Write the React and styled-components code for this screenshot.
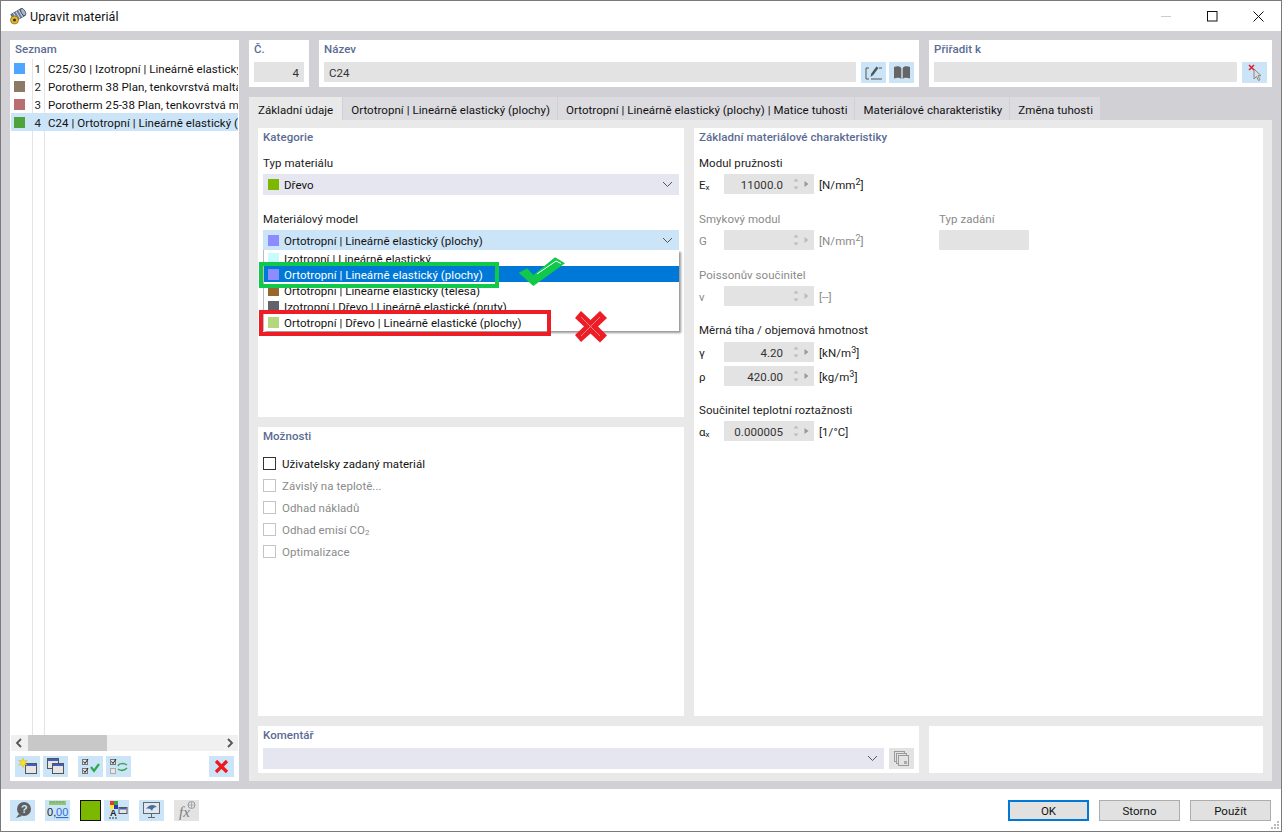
import React from 'react';
import styled, { createGlobalStyle } from 'styled-components';

const Global = createGlobalStyle`
  html, body { margin: 0; padding: 0; background: #fff; }
  body { font-family: Roboto, "Noto Sans", sans-serif; font-size: 11.5px; letter-spacing: .05px; color: #111; }
  * { box-sizing: border-box; }
  sub { font-size: 8px; line-height: 0; vertical-align: -1px; }
  sup { font-size: 9px; line-height: 0; vertical-align: 4px; }
`;

const Win = styled.div`
  width: 1282px; height: 832px; display: flex; flex-direction: column;
  border: 1px solid #7a7a7a; background: #fff; position: relative; overflow: hidden;
`;
const TitleBar = styled.div`
  height: 30px; display: flex; align-items: center; padding-left: 8px; gap: 3px; font-size: 12.5px; flex: none;
`;
const WinBtns = styled.div`
  margin-left: auto; display: flex; align-items: center; height: 100%;
`;
const WinBtn = styled.div`
  width: 46px; height: 100%; display: flex; align-items: center; justify-content: center;
`;
const Main = styled.div`
  height: 758px; flex: none; background: #d0d0d5; padding: 9px 9px 8px; display: flex; gap: 10px;
`;
const Left = styled.div`
  width: 229px; background: #fff; display: flex; flex-direction: column; flex: none;
`;
const Heading = styled.div`
  font-weight: 500; color: #5b6b94; height: 19px; padding: 2px 5px 0; font-size: 11.5px;
`;
const ListArea = styled.div`
  flex: 1; position: relative; overflow: hidden;
`;
const TreeLine = styled.div`
  position: absolute; top: 0; bottom: 0; left: ${p => p.$x}px; width: 1px; background: #e4e4e4;
`;
const Row = styled.div`
  height: 18px; display: flex; align-items: center; white-space: nowrap; position: relative;
  margin-left: 1px; margin-right: 1px; background: ${p => p.$sel ? '#cce4f7' : 'transparent'}; overflow: hidden;
`;
const RowSwatch = styled.span`
  width: 11px; height: 11px; background: ${p => p.$c}; margin-left: 3px; flex: none;
`;
const RowNum = styled.span`
  width: 16px; text-align: right; flex: none; color: #222; padding-top: 1px;
`;
const RowText = styled.span` margin-left: 7px; padding-top: 1px; `;
const HScroll = styled.div`
  height: 16px; margin: 0 1px; background: #f0f0f0; display: flex; align-items: center; justify-content: space-between; position: relative; flex: none;
`;
const Thumb = styled.div`
  position: absolute; left: 17px; width: 79px; top: 0; bottom: 0; background: #c8c8c8;
`;
const IconBar = styled.div`
  height: 30px; display: flex; gap: 3px; padding: 5px 5px 4px; flex: none;
`;
const IconBtn = styled.div`
  width: 25px; height: 21px; background: ${p => p.$off ? '#e3e3e3' : '#cce4f7'}; display: flex; align-items: center; justify-content: center; flex: none;
  margin-left: ${p => p.$ml || 0}px;
`;
const Right = styled.div`
  flex: 1; display: flex; flex-direction: column; min-width: 0;
`;
const TopRow = styled.div`
  display: grid; grid-template-columns: 60px 600px 343px; gap: 10px; height: 47px; flex: none;
`;
const TopCard = styled.div`
  background: #fff; display: flex; flex-direction: column;
`;
const TopBody = styled.div`
  display: flex; gap: 3px; padding: 3px 5px 0;
`;
const Field = styled.div`
  flex: 1; height: 20px; background: #e3e3e3; display: flex; align-items: center; margin-right: ${p => p.$mr || 0}px;
  padding: 2px 5px 0; justify-content: ${p => p.$right ? 'flex-end' : 'flex-start'}; color: #333;
`;
const Tabs = styled.div`
  display: flex; margin-top: 10px; height: 23px; flex: none;
`;
const Tab = styled.div`
  padding: 3px ${p => p.$active ? 9 : 7}px 0 ${p => p.$active ? 9 : 8}px; height: 23px; display: flex; align-items: center; white-space: nowrap;
  background: ${p => p.$active ? '#e9e9e9' : '#dcdce0'}; border-right: 1px solid #d0d0d5;
  color: #111;
`;
const TabBody = styled.div`
  flex: 1; background: #e9e9e9; padding: 8px 9px; display: flex; flex-direction: column; gap: 10px; min-height: 0;
`;
const Columns = styled.div`
  flex: 1; display: flex; gap: 10px; min-height: 0;
`;
const LeftCol = styled.div`
  width: 426px; display: flex; flex-direction: column; gap: 10px; flex: none;
`;
const Card = styled.div`
  background: #fff; flex: 1; min-width: 0; display: flex; flex-direction: column;
`;
const CommentCard = styled(Card)` flex: none; width: 661px; `;
const Section = styled.div`
  padding: 0 5px; margin-top: ${p => p.$mt || 0}px;
`;
const Label = styled.div`
  height: 16px; line-height: 16px; color: ${p => p.$off ? '#8a8a8a' : '#222'};
`;
const Combo = styled.div`
  height: ${p => p.$h || 20}px; background: ${p => p.$c || '#e6e6f0'}; display: flex; align-items: center; padding: 0 5px; margin-top: 3px; color: #111;
`;
const ComboText = styled.span` padding-top: 1px; `;
const Swatch = styled.span`
  width: 11px; height: 11px; background: ${p => p.$c}; margin-right: 5px; flex: none;
`;
const Chevron = styled.svg`
  margin-left: auto; margin-right: 1px; flex: none;
`;
const Popup = styled.div`
  position: absolute; left: 5px; top: 122px; width: 416px; height: 81px; background: #fff;
  border-left: 1px solid #bbb; box-shadow: 2px 2px 2px #999; overflow: hidden; z-index: 2;
`;
const PopRow = styled.div`
  height: 16px; display: flex; align-items: center; padding-left: 4px; white-space: nowrap;
  background: ${p => p.$sel ? '#0078d7' : 'transparent'}; color: ${p => p.$sel ? '#fff' : '#111'};
`;
const Mark = styled.div`
  position: absolute; left: ${p => p.$x}px; top: ${p => p.$y}px; width: ${p => p.$w}px; height: ${p => p.$h}px;
  border: 4px solid ${p => p.$c}; z-index: 3;
`;
const MarkIcon = styled.svg`
  position: absolute; left: ${p => p.$x}px; top: ${p => p.$y}px; z-index: 4;
`;
const CatCard = styled(Card)` position: relative; `;
const CheckList = styled.div` margin-top: 6px; `;
const CheckRow = styled.div`
  height: 22px; display: flex; align-items: center; gap: 6px; padding-left: 5px; color: ${p => p.$off ? '#8a8a8a' : '#111'};
`;
const CheckText = styled.span` padding-top: 2px; `;
const Box = styled.span`
  width: 13px; height: 13px; background: #fff; border: 1px solid ${p => p.$off ? '#c4c4c4' : '#333'}; flex: none;
`;
const SpinRow = styled.div`
  display: flex; align-items: center; height: 20px; margin-top: ${p => p.$mt || 3}px; color: ${p => p.$off ? '#8a8a8a' : '#222'};
`;
const Sym = styled.span` width: 25px; flex: none; padding-top: 1px; `;
const Spin = styled.div`
  width: 90px; height: 20px; background: #e3e3e3; display: flex; align-items: center; flex: none; color: #333;
`;
const SpinVal = styled.span` width: 59px; text-align: right; flex: none; padding-top: 1px; `;
const SpinCtl = styled.svg` margin-left: auto; margin-right: 3px; flex: none; `;
const Unit = styled.span` margin-left: 5px; padding-top: 1px; `;
const GFlex = styled.div` display: flex; `;
const TypeCol = styled.div` margin-left: 44px; width: 90px; `;
const TypeField = styled.div` width: 90px; height: 20px; background: #e3e3e3; margin-top: 3px; `;
const GCol = styled.div` width: 196px; `;
const BottomRow = styled.div`
  height: 47px; display: flex; gap: 10px; flex: none;
`;
const CommentBody = styled.div`
  display: flex; padding: 3px 5px 0; gap: 5px;
`;
const CommentCombo = styled(Combo)` flex: 1; margin-top: 0; height: 21px; `;
const Footer = styled.div`
  flex: 1; display: flex; align-items: center; padding: 0 9px; position: relative;
`;
const Color = styled.div`
  width: 21px; height: 21px; background: #7cb800; border: 1px solid #111; margin-left: 10px; margin-right: 3px; flex: none;
`;
const FootBtns = styled.div` margin-left: auto; margin-right: 1px; display: flex; gap: 10px; `;
const Btn = styled.div`
  width: 81px; height: 21px; background: #e1e1e1; display: flex; align-items: center; justify-content: center; padding-top: 2px;
  border: ${p => p.$def ? '2px solid #0078d7' : '1px solid #adadad'}; color: #111;
`;
const Grip = styled.svg` position: absolute; right: 1px; bottom: 1px; `;

const ChevronIcon = () => (
  <Chevron width="11" height="7" viewBox="0 0 11 7"><path d="M1 1l4.500 4.500L10 1" fill="none" stroke="#555" strokeWidth="1" /></Chevron>
);
const SpinIcon = ({ off }) => (
  <SpinCtl width="22" height="18" viewBox="0 0 22 18">
    <path d="M4.500 6.500l2.500-3 2.500 3zM4.500 11.500l2.500 3 2.500-3z" fill="#bdbdbd" />
    <path d="M15.500 6l4 3-4 3z" fill={off ? '#bbb' : '#999'} />
  </SpinCtl>
);
const SpinField = ({ value, off }) => (
  <Spin><SpinVal>{value}</SpinVal><SpinIcon off={off} /></Spin>
);

const WinIcon = ({ x = 6, y = 6 }) => (
  <g><rect x={x + .5} y={y + .5} width="11" height="10" fill="#e6e6e6" stroke="#555" /><rect x={x + 1} y={y + 1} width="10" height="2" fill="#3e5fc4" /></g>
);

const Icons = {
  new: <svg width="21" height="19" viewBox="0 0 21 19"><WinIcon x={8} y={6} /><path d="M6 1l1.200 3 3-.6-2 2.300 2 2.500-3-.7L6 10.500 4.800 7.500l-3 .7 2-2.500-2-2.300 3 .6z" fill="#f7e22a" stroke="#c9a400" strokeWidth=".4" /></svg>,
  copy: <svg width="21" height="19" viewBox="0 0 21 19"><WinIcon x={2} y={1} /><WinIcon x={7} y={6} /></svg>,
  checks: <svg width="21" height="19" viewBox="0 0 21 19"><rect x="2.500" y="2.500" width="5" height="5" fill="#e4e4e4" stroke="#777" /><rect x="2.500" y="11.500" width="5" height="5" fill="#e4e4e4" stroke="#777" /><path d="M3.500 4.500l1.500 2 3-4.500M3.500 13.500l1.500 2 3-4.500" fill="none" stroke="#222" strokeWidth="1" /><path d="M11 10l3 4 5-7" fill="none" stroke="#2fa84f" strokeWidth="2.200" /></svg>,
  swap: <svg width="21" height="19" viewBox="0 0 21 19"><rect x="2.500" y="2.500" width="5" height="5" fill="#e4e4e4" stroke="#777" /><rect x="2.500" y="11.500" width="5" height="5" fill="#e8e8e8" stroke="#aaa" /><path d="M3.500 4.500l1.500 2 3-4.500" fill="none" stroke="#222" /><path d="M10 9c1-3 6-3 9-1M19 11c-3 3-6 3-9 1" fill="none" stroke="#3aa655" strokeWidth="1.500" /></svg>,
  del: <svg width="15" height="15" viewBox="0 0 15 15"><path d="M2 2l11 11M13 2L2 13" stroke="#f01818" strokeWidth="3.200" /></svg>,
  edit: <svg width="20" height="18" viewBox="0 0 20 18"><path d="M5 4H2v11h3M7 15h11" fill="none" stroke="#555" strokeWidth="1" /><path d="M6.500 13l.8-3.500L12.500 2.500l2 1.500-5.200 7z" fill="#555" /><path d="M15 4h3" stroke="#555" /></svg>,
  book: <svg width="20" height="18" viewBox="0 0 20 18"><path d="M2 3c3-1 6-1 7.300 1v11C8 13.500 5 13.500 2 14.500zM18 3c-3-1-6-1-7.300 1v11c1.300-1.500 4.300-1.500 7.300-.5z" fill="#666" /></svg>,
  pick: <svg width="20" height="18" viewBox="0 0 20 18"><path d="M9 5v10l2.500-2.500 2 4 1.500-.8-2-4H16z" fill="#ddd" stroke="#888" /><path d="M4 1l5 5M9 1L4 6" stroke="#e02020" strokeWidth="1.500" /></svg>,
  help: <svg width="20" height="19" viewBox="0 0 20 19"><circle cx="11" cy="8" r="7" fill="#5f5f5f" /><path d="M6 13l-3 4 6-2z" fill="#5f5f5f" /><text x="8" y="12" fontSize="11" fontWeight="700" fill="#cce4f7" fontFamily="Liberation Sans">?</text></svg>,
  units: <svg width="22" height="20" viewBox="0 0 22 20"><rect x="2" y="1" width="17" height="4" fill="#93c478" /><path d="M4 1v2M7 1v2M10 1v2M13 1v2M16 1v2" stroke="#5f9a48" strokeWidth=".7" /><text x="0" y="16" fontSize="11" fill="#222" fontFamily="Liberation Sans">0,</text><text x="9" y="16" fontSize="11" fill="#2b6fd6" textDecoration="underline" fontFamily="Liberation Sans">00</text></svg>,
  color: <svg width="22" height="20" viewBox="0 0 22 20"><rect x="4" y="1" width="4" height="4" fill="#e33" /><rect x="8" y="1" width="4" height="4" fill="#3a3" /><rect x="4" y="5" width="4" height="4" fill="#ee3" /><rect x="8" y="5" width="4" height="4" fill="#33c" /><text x="4" y="16" fontSize="9" fontWeight="700" fill="#222" fontFamily="Liberation Sans">A</text><path d="M3 18h2M6 18h2M9 18h2" stroke="#333" /><rect x="13" y="7.500" width="8" height="6" fill="#e6e6e6" stroke="#555" /><rect x="13.500" y="8" width="7" height="1.500" fill="#3e5fc4" /></svg>,
  screen: <svg width="22" height="20" viewBox="0 0 22 20"><rect x="2.500" y="2.500" width="16" height="11" fill="#dfe8f0" stroke="#666" /><path d="M5 9c3-5 8-5 11-2-3 0-4 1-5 4-1-2-3-3-6-2z" fill="#4a6c9a" /><path d="M10.500 14v3M7 17.500h7" stroke="#666" /></svg>,
  fx: <svg width="22" height="20" viewBox="0 0 22 20"><text x="3" y="17" fontSize="15" fontStyle="italic" fill="#7d7d7d" fontFamily="Liberation Serif">fx</text><circle cx="15.500" cy="5" r="3.500" fill="none" stroke="#999" /><path d="M15.500 2v6M12.500 5h6" stroke="#999" strokeWidth=".7" /></svg>,
  pages: <svg width="18" height="18" viewBox="0 0 18 18"><rect x="1.500" y="1.500" width="10" height="10" fill="none" stroke="#9a9a9a" /><rect x="3.500" y="3.500" width="10" height="10" fill="#e3e3e3" stroke="#9a9a9a" /><rect x="5.500" y="5.500" width="10" height="10" fill="#e3e3e3" stroke="#9a9a9a" /><rect x="11" y="11" width="3" height="3" fill="#aaa" /></svg>,
};

const listRows = [
  ['#4da6ff', '1', 'C25/30 | Izotropní | Lineárně elastický (plochy)'],
  ['#8c7a64', '2', 'Porotherm 38 Plan, tenkovrstvá malta | Izotropní'],
  ['#b96f6f', '3', 'Porotherm 25-38 Plan, tenkovrstvá malta | Izotropní'],
  ['#4ea33c', '4', 'C24 | Ortotropní | Lineárně elastický (plochy)', true],
];

const Arrow = ({ d }) => (
  <svg width="16" height="16" viewBox="0 0 16 16"><path d={d} fill="none" stroke="#555" strokeWidth="1.800" /></svg>
);

export default function App() {
  return (
    <Win>
      <Global />
      <TitleBar>
        <svg width="18" height="18" viewBox="0 0 18 18">
          <g transform="rotate(-30 9 8)">
            <rect x="3" y="4" width="12" height="8" fill="#6d7f9c" stroke="#2d3440" strokeWidth=".6" />
            <path d="M6 4v8M9 4v8M12 4v8" stroke="#cdd6e4" strokeWidth="1" />
            <ellipse cx="15" cy="8" rx="2" ry="4" fill="#a9b6c9" stroke="#2d3440" strokeWidth=".6" />
          </g>
          <circle cx="5.500" cy="13" r="4" fill="#e2b92e" stroke="#6b5a10" strokeWidth=".6" />
          <circle cx="5.500" cy="13" r="1.500" fill="#3a3312" />
        </svg>
        <span>Upravit materiál</span>
        <WinBtns>
          <WinBtn><svg width="11" height="11" viewBox="0 0 11 11"><path d="M0 5.500h10" stroke="#ccc" /></svg></WinBtn>
          <WinBtn><svg width="11" height="11" viewBox="0 0 11 11"><rect x=".5" y=".5" width="9.500" height="9.500" fill="none" stroke="#111" /></svg></WinBtn>
          <WinBtn><svg width="11" height="11" viewBox="0 0 11 11"><path d="M.5.500l10 10M10.500.500l-10 10" stroke="#111" /></svg></WinBtn>
        </WinBtns>
      </TitleBar>
      <Main>
        <Left>
          <Heading>Seznam</Heading>
          <ListArea>
            <TreeLine $x={22} /><TreeLine $x={34} />
            {listRows.map(r => (
              <Row key={r[1]} $sel={r[3]}>
                <RowSwatch $c={r[0]} />
                <RowNum>{r[1]}</RowNum>
                <RowText>{r[2]}</RowText>
              </Row>
            ))}
          </ListArea>
          <HScroll>
            <Thumb />
            <Arrow d="M10 4l-4 4 4 4" />
            <Arrow d="M6 4l4 4-4 4" />
          </HScroll>
          <IconBar>
            <IconBtn>{Icons.new}</IconBtn>
            <IconBtn>{Icons.copy}</IconBtn>
            <IconBtn $ml={7}>{Icons.checks}</IconBtn>
            <IconBtn>{Icons.swap}</IconBtn>
            <IconBtn $ml={75}>{Icons.del}</IconBtn>
          </IconBar>
        </Left>
        <Right>
          <TopRow>
            <TopCard>
              <Heading>Č.</Heading>
              <TopBody><Field $right>4</Field></TopBody>
            </TopCard>
            <TopCard>
              <Heading>Název</Heading>
              <TopBody>
                <Field $mr={2}>C24</Field>
                <IconBtn>{Icons.edit}</IconBtn>
                <IconBtn>{Icons.book}</IconBtn>
              </TopBody>
            </TopCard>
            <TopCard>
              <Heading>Přiřadit k</Heading>
              <TopBody>
                <Field $mr={2} />
                <IconBtn>{Icons.pick}</IconBtn>
              </TopBody>
            </TopCard>
          </TopRow>
          <Tabs>
            <Tab $active>Základní údaje</Tab>
            <Tab>Ortotropní | Lineárně elastický (plochy)</Tab>
            <Tab>Ortotropní | Lineárně elastický (plochy) | Matice tuhosti</Tab>
            <Tab>Materiálové charakteristiky</Tab>
            <Tab>Změna tuhosti</Tab>
          </Tabs>
          <TabBody>
            <Columns>
              <LeftCol>
                <CatCard>
                  <Heading>Kategorie</Heading>
                  <Section $mt={8}>
                    <Label>Typ materiálu</Label>
                    <Combo $h={21}><Swatch $c="#7cb800" /><ComboText>Dřevo</ComboText><ChevronIcon /></Combo>
                  </Section>
                  <Section $mt={16}>
                    <Label>Materiálový model</Label>
                    <Combo $c="#cce4f7"><Swatch $c="#8c8cff" /><ComboText>Ortotropní | Lineárně elastický (plochy)</ComboText><ChevronIcon /></Combo>
                  </Section>
                  <Popup>
                    <PopRow><Swatch $c="#c8fcfc" /><ComboText>Izotropní | Lineárně elastický</ComboText></PopRow>
                    <PopRow $sel><Swatch $c="#8c8cff" /><ComboText>Ortotropní | Lineárně elastický (plochy)</ComboText></PopRow>
                    <PopRow><Swatch $c="#96682e" /><ComboText>Ortotropní | Lineárně elastický (tělesa)</ComboText></PopRow>
                    <PopRow><Swatch $c="#62626a" /><ComboText>Izotropní | Dřevo | Lineárně elastické (pruty)</ComboText></PopRow>
                    <PopRow><Swatch $c="#b4d97c" /><ComboText>Ortotropní | Dřevo | Lineárně elastické (plochy)</ComboText></PopRow>
                  </Popup>
                  <Mark $x={1} $y={134} $w={240} $h={26} $c="#10c84a" />
                  <Mark $x={1} $y={182} $w={292} $h={26} $c="#ee1c25" />
                  <MarkIcon $x={260} $y={129} width="48" height="31" viewBox="0 0 48 31">
                    <path d="M.7 15.700L9.300 11.300l6 6.700L37 .3l10 6L15.300 29z" fill="#10c84a" />
                    <path d="M19 17L38 4l5 2.500" fill="none" stroke="#fff" strokeWidth="1" />
                  </MarkIcon>
                  <MarkIcon $x={315} $y={182} width="35" height="33" viewBox="0 0 35 33">
                    <path d="M2 8l6-7 9.500 9L27 1l7 7-9 8.500 9 9-7 7-9.500-9L8 32l-6-7 9-8.500z" fill="#ee1c25" />
                    <path d="M8 7l19 19M27 7L8 26" stroke="#f3b0b0" strokeWidth=".7" />
                  </MarkIcon>
                </CatCard>
                <Card>
                  <Heading>Možnosti</Heading>
                  <CheckList>
                    <CheckRow><Box /><CheckText>Uživatelsky zadaný materiál</CheckText></CheckRow>
                    <CheckRow $off><Box $off /><CheckText>Závislý na teplotě...</CheckText></CheckRow>
                    <CheckRow $off><Box $off /><CheckText>Odhad nákladů</CheckText></CheckRow>
                    <CheckRow $off><Box $off /><CheckText>Odhad emisí CO<sub>2</sub></CheckText></CheckRow>
                    <CheckRow $off><Box $off /><CheckText>Optimalizace</CheckText></CheckRow>
                  </CheckList>
                </Card>
              </LeftCol>
              <Card>
                <Heading>Základní materiálové charakteristiky</Heading>
                <Section $mt={8}>
                  <Label>Modul pružnosti</Label>
                  <SpinRow><Sym>E<sub>x</sub></Sym><SpinField value="11000.0" /><Unit>[N/mm<sup>2</sup>]</Unit></SpinRow>
                </Section>
                <Section $mt={17}>
                  <GFlex>
                    <GCol>
                      <Label $off>Smykový modul</Label>
                      <SpinRow $off><Sym>G</Sym><SpinField off /><Unit>[N/mm<sup>2</sup>]</Unit></SpinRow>
                    </GCol>
                    <TypeCol>
                      <Label $off>Typ zadání</Label>
                      <TypeField />
                    </TypeCol>
                  </GFlex>
                </Section>
                <Section $mt={17}>
                  <Label $off>Poissonův součinitel</Label>
                  <SpinRow $off><Sym>ν</Sym><SpinField off /><Unit>[--]</Unit></SpinRow>
                </Section>
                <Section $mt={16}>
                  <Label>Měrná tíha / objemová hmotnost</Label>
                  <SpinRow $mt={4}><Sym>γ</Sym><SpinField value="4.20" /><Unit>[kN/m<sup>3</sup>]</Unit></SpinRow>
                  <SpinRow $mt={4}><Sym>ρ</Sym><SpinField value="420.00" /><Unit>[kg/m<sup>3</sup>]</Unit></SpinRow>
                </Section>
                <Section $mt={16}>
                  <Label>Součinitel teplotní roztažnosti</Label>
                  <SpinRow><Sym>α<sub>x</sub></Sym><SpinField value="0.000005" /><Unit>[1/°C]</Unit></SpinRow>
                </Section>
              </Card>
            </Columns>
            <BottomRow>
              <CommentCard>
                <Heading>Komentář</Heading>
                <CommentBody>
                  <CommentCombo><ChevronIcon /></CommentCombo>
                  <IconBtn $off>{Icons.pages}</IconBtn>
                </CommentBody>
              </CommentCard>
              <Card />
            </BottomRow>
          </TabBody>
        </Right>
      </Main>
      <Footer>
        <IconBtn>{Icons.help}</IconBtn>
        <IconBtn $ml={10}>{Icons.units}</IconBtn>
        <Color />
        <IconBtn>{Icons.color}</IconBtn>
        <IconBtn $ml={10}>{Icons.screen}</IconBtn>
        <IconBtn $ml={10} $off>{Icons.fx}</IconBtn>
        <FootBtns>
          <Btn $def>OK</Btn>
          <Btn>Storno</Btn>
          <Btn>Použít</Btn>
        </FootBtns>
        <Grip width="10" height="10" viewBox="0 0 10 10">
          <path d="M7 1h2v2H7zM4 4h2v2H4zM7 4h2v2H7zM1 7h2v2H1zM4 7h2v2H4zM7 7h2v2H7z" fill="#bbb" />
        </Grip>
      </Footer>
    </Win>
  );
}
